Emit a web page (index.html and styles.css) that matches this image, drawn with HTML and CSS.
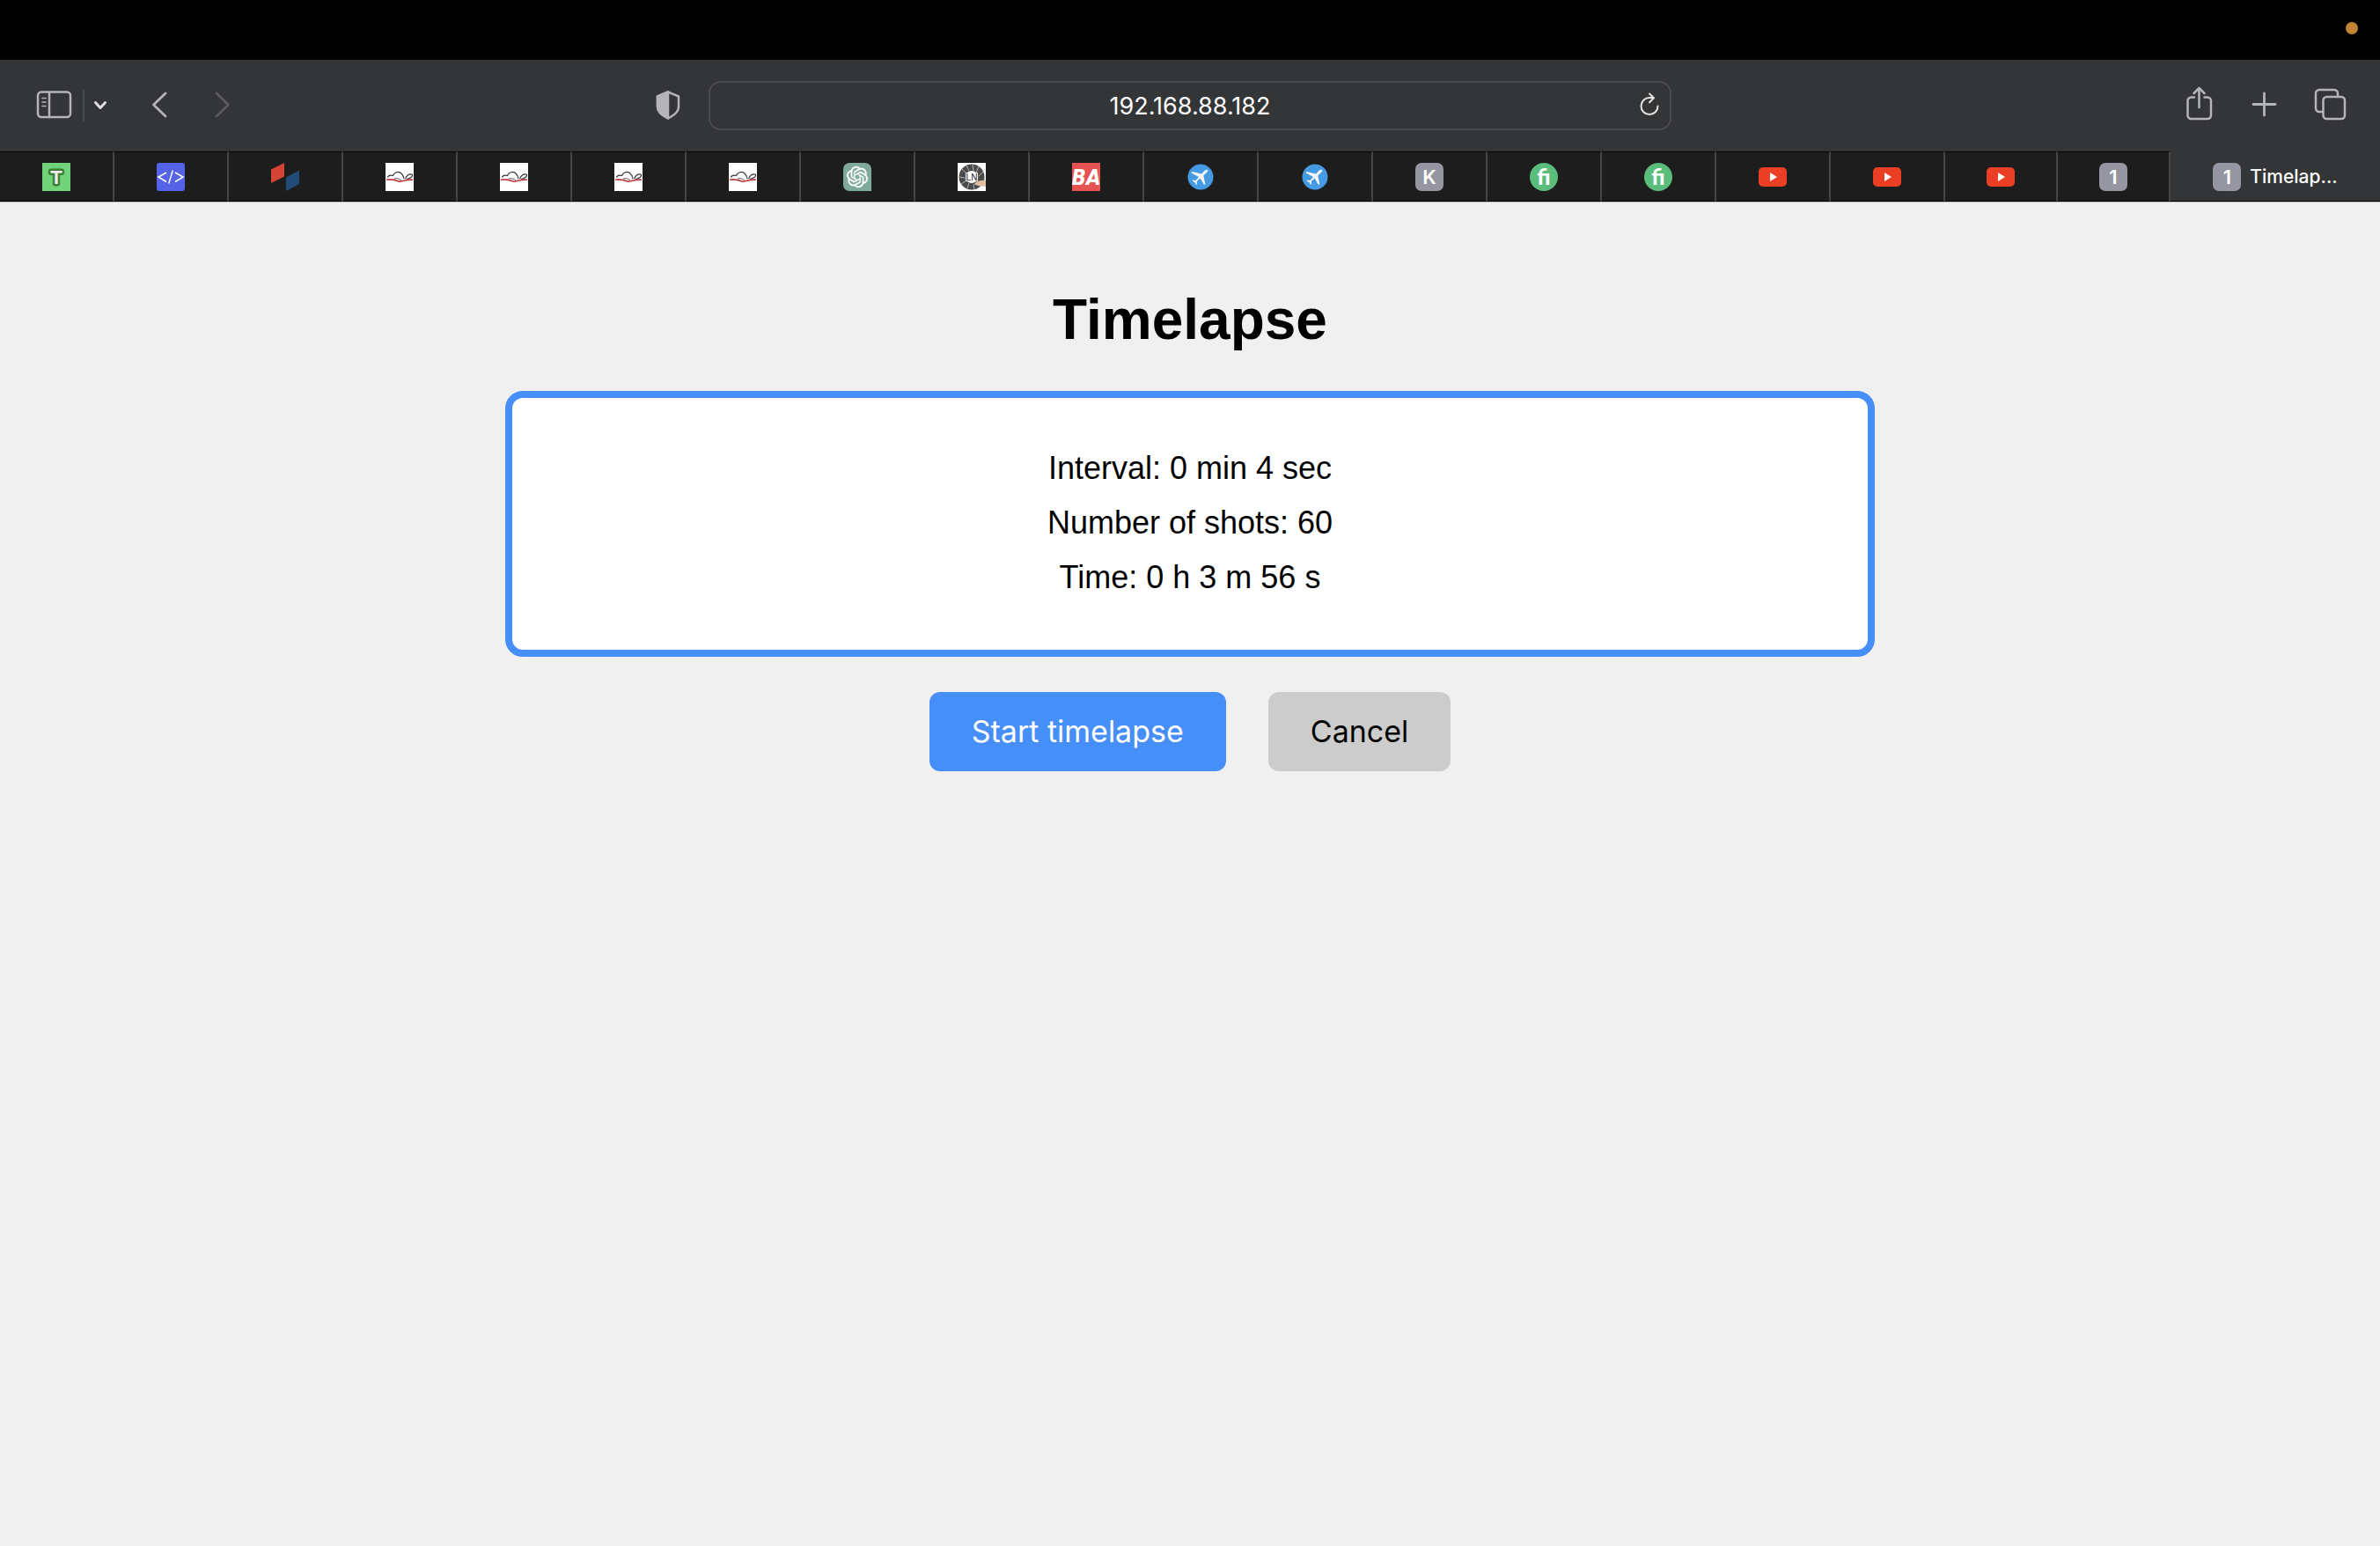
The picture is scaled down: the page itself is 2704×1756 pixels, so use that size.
FILE: index.html
```html
<!DOCTYPE html>
<html lang="en">
<head>
<meta charset="utf-8">
<meta name="viewport" content="width=device-width, initial-scale=1">
<title>Timelapse</title>
<link rel="stylesheet" href="styles.css">
</head>
<body>
<svg class="symbols" aria-hidden="true">
  <symbol id="cloud" viewBox="0 0 32 32">
    <rect width="32" height="32" fill="#fff"/>
    <path d="M2.500 16.500c1-3 4-2.500 6-2 1.500-4 6-5 9-3 2.500 2 3 4 3.500 6.500M22.500 18c1-3 4-6 7.500-5 2 2-2 5-6 5.500" fill="none" stroke="#333" stroke-width="1.200"/>
    <path d="M10 18c3-1 6 0 8 2" fill="none" stroke="#555" stroke-width="1"/>
    <path d="M1 19.200c5-1 9 0 15 2 5-1 9-2.500 15-2" fill="none" stroke="#c0393b" stroke-width="1.600"/>
  </symbol>
  <symbol id="plane" viewBox="0 0 32 32">
    <circle cx="16" cy="16" r="14.500" fill="#459be3"/>
    <path d="M24 8c-1.200-.8-2.500 0-3.500 1l-3.500 3.500L6.500 10l-1 1.300 8.500 4.700-3.500 4-3-.5-1 1 3 1.500 1.500 3 1-1-.3-3 4-3.500 4.300 7.500 1.300-1-2-9.500 3.500-3.500c1-1 2-2 1.200-3z" fill="#f6f6f6"/>
  </symbol>
  <symbol id="fi" viewBox="0 0 32 32">
    <circle cx="16" cy="16" r="16" fill="#5bbd7b"/>
    <text class="favicon__fi" x="16" y="25">fi</text>
  </symbol>
  <symbol id="video" viewBox="0 0 32 32">
    <rect y="5" width="32" height="22" rx="5" fill="#ea3f25"/>
    <path d="M13 11l8 5-8 5z" fill="#fff"/>
  </symbol>
</svg>

<div class="menubar"><span class="menubar__dot"></span></div>

<header class="toolbar">
  <div class="toolbar__side">
    <button class="icon-btn" aria-label="Show sidebar"><svg width="40" height="40" viewBox="42 100 40 40"><rect x="43" y="104.500" width="37" height="28.500" rx="4"/><path d="M56 105v28"/><path d="M48 111.500h4M48 116h4M48 120.500h4" stroke-width="1.600"/></svg></button>
    <span class="toolbar__divider"></span>
    <button class="icon-btn icon-btn--menu" aria-label="Tab groups"><svg width="16" height="40" viewBox="106 100 16 40"><path d="M108.500 116.500l5.500 6 5.500-6" stroke-width="3"/></svg></button>
    <button class="icon-btn icon-btn--back" aria-label="Back"><svg width="18" height="40" viewBox="172 100 18 40"><path d="M188 106l-13.500 13 13.500 13" stroke-width="2.800"/></svg></button>
    <button class="icon-btn icon-btn--forward" aria-label="Forward" disabled><svg width="18" height="40" viewBox="244 100 18 40"><path d="M246 106l13.500 13-13.500 13" stroke-width="2.800"/></svg></button>
    <button class="icon-btn icon-btn--shield" aria-label="Privacy report"><svg width="30" height="40" viewBox="744 100 30 40"><path d="M759 104.500l12 5v12c0 6-6 10-12 13-6-3-12-7-12-13v-12z"/><path d="M759 104.500v30c-6-3-12-7-12-13v-12z" fill="currentColor"/></svg></button>
  </div>
  <form class="address">
    <input class="address__input" type="text" value="192.168.88.182" aria-label="Address">
    <button class="icon-btn address__reload" type="button" aria-label="Reload"><svg width="24" height="40" viewBox="1861 100 24 40"><path d="M1883.500 120.500a9.500 9.500 0 1 1-9.500-9.500h4.500M1874 106.500l5 4.800-5 5" stroke-width="2"/></svg></button>
  </form>
  <div class="toolbar__side toolbar__side--right">
    <button class="icon-btn" aria-label="Share"><svg width="32" height="40" viewBox="2484 100 32 40"><path d="M2493 110.500h-3.500a4 4 0 0 0-4 4v16.500a4 4 0 0 0 4 4h18.500a4 4 0 0 0 4-4v-16.500a4 4 0 0 0-4-4h-3.500M2498.500 122v-21M2492.500 106l6-6 6 6"/></svg></button>
    <button class="icon-btn" aria-label="New tab"><svg width="30" height="40" viewBox="2557 100 30 40"><path d="M2571.500 106v25M2559 118.500h25" stroke-width="2.800"/></svg></button>
    <button class="icon-btn" aria-label="Tab overview"><svg width="36" height="40" viewBox="2630 100 36 40"><rect x="2639.500" y="110" width="24.500" height="25" rx="4"/><path d="M2639 127h-4a4 4 0 0 1-4-4v-17a4 4 0 0 1 4-4h17a4 4 0 0 1 4 4v3.500"/></svg></button>
  </div>
</header>

<nav class="tabs" aria-label="Open tabs">
  <a class="tab" href="#"><svg class="favicon" viewBox="0 0 32 32"><rect width="32" height="32" fill="#71d47b"/><text class="favicon__t" x="16" y="24">T</text></svg></a>
  <a class="tab" href="#"><svg class="favicon" viewBox="0 0 32 32"><rect width="32" height="32" rx="3" fill="#5563e8"/><path d="M11 11L2 16l9 5.500M21 11l9 5-9 5.500M18.300 8.500l-4.600 15" fill="none" stroke="#fff" stroke-width="1.500"/></svg></a>
  <a class="tab" href="#"><svg class="favicon" viewBox="0 0 32 32"><path d="M0 7.500L15 0v15.500L0 23z" fill="#d54537"/><path d="M17 16.500L32 8.500V24l-15 8z" fill="#214c78"/></svg></a>
  <a class="tab" href="#"><svg class="favicon"><use href="#cloud"/></svg></a>
  <a class="tab" href="#"><svg class="favicon"><use href="#cloud"/></svg></a>
  <a class="tab" href="#"><svg class="favicon"><use href="#cloud"/></svg></a>
  <a class="tab" href="#"><svg class="favicon"><use href="#cloud"/></svg></a>
  <a class="tab" href="#"><svg class="favicon" viewBox="0 0 32 32"><path d="M7 0h18a7 7 0 0 1 7 7v25H7a7 7 0 0 1-7-7V7a7 7 0 0 1 7-7z" fill="#80a99d"/><path transform="translate(4 4)" fill="#fff" stroke="#fff" stroke-width=".3" d="M22.2819 9.8211a5.9847 5.9847 0 0 0-.5157-4.9108 6.0462 6.0462 0 0 0-6.5098-2.9A6.0651 6.0651 0 0 0 4.9807 4.1818a5.9847 5.9847 0 0 0-3.9977 2.9 6.0462 6.0462 0 0 0 .7427 7.0966 5.98 5.98 0 0 0 .511 4.9107 6.051 6.051 0 0 0 6.5146 2.9001A5.9847 5.9847 0 0 0 13.2599 24a6.0557 6.0557 0 0 0 5.7718-4.2058 5.9894 5.9894 0 0 0 3.9977-2.9001 6.0557 6.0557 0 0 0-.7475-7.0729zm-9.022 12.6081a4.4755 4.4755 0 0 1-2.8764-1.0408l.1419-.0804 4.7783-2.7582a.7948.7948 0 0 0 .3927-.6813v-6.7369l2.02 1.1686a.071.071 0 0 1 .038.052v5.5826a4.504 4.504 0 0 1-4.4945 4.4944zm-9.6607-4.1254a4.4708 4.4708 0 0 1-.5346-3.0137l.142.0852 4.783 2.7582a.7712.7712 0 0 0 .7806 0l5.8428-3.3685v2.3324a.0804.0804 0 0 1-.0332.0615L9.74 19.9502a4.4992 4.4992 0 0 1-6.1408-1.6464zM2.3408 7.8956a4.485 4.485 0 0 1 2.3655-1.9728V11.6a.7664.7664 0 0 0 .3879.6765l5.8144 3.3543-2.0201 1.1685a.0757.0757 0 0 1-.071 0l-4.8303-2.7865A4.504 4.504 0 0 1 2.3408 7.872zm16.5963 3.8558L13.1038 8.364 15.1192 7.2a.0757.0757 0 0 1 .071 0l4.8303 2.7913a4.4944 4.4944 0 0 1-.6765 8.1042v-5.6772a.79.79 0 0 0-.407-.667zm2.0107-3.0231l-.142-.0852-4.7735-2.7818a.7759.7759 0 0 0-.7854 0L9.409 9.2297V6.8974a.0662.0662 0 0 1 .0284-.0615l4.8303-2.7866a4.4992 4.4992 0 0 1 6.6802 4.66zM8.3065 12.863l-2.02-1.1638a.0804.0804 0 0 1-.038-.0567V6.0742a4.4992 4.4992 0 0 1 7.3757-3.4537l-.142.0805L8.704 5.459a.7948.7948 0 0 0-.3927.6813zm1.0976-2.3654l2.602-1.4998 2.6069 1.4998v2.9994l-2.5974 1.4997-2.6067-1.4997Z"/></svg></a>
  <a class="tab" href="#"><svg class="favicon" viewBox="0 0 32 32"><rect width="32" height="32" fill="#fff"/><circle cx="16" cy="16" r="10.800" fill="none" stroke="#4b4b4d" stroke-width="7.400"/><path d="M10 12L5 7M13 9l-3-6M18 9l-1-7M21 11l3-7M24 15l5-5M8 17l-6-1M10 20l-6 4M13 23l-2 6M18 24l1 6M22 22l4 4" stroke="#ccc" stroke-width=".8"/><path d="M19 24c2-3 6-4 13-4.500v7.500c-4-1-9 0-13-3z" fill="#e0c1a4"/><text class="favicon__ln" x="16" y="20">LN</text></svg></a>
  <a class="tab" href="#"><svg class="favicon" viewBox="0 0 32 32"><rect width="32" height="32" fill="#e65352"/><text class="favicon__ba" x="16" y="25">BA</text></svg></a>
  <a class="tab" href="#"><svg class="favicon"><use href="#plane"/></svg></a>
  <a class="tab" href="#"><svg class="favicon"><use href="#plane"/></svg></a>
  <a class="tab" href="#"><span class="favicon favicon--letter">K</span></a>
  <a class="tab" href="#"><svg class="favicon"><use href="#fi"/></svg></a>
  <a class="tab" href="#"><svg class="favicon"><use href="#fi"/></svg></a>
  <a class="tab" href="#"><svg class="favicon"><use href="#video"/></svg></a>
  <a class="tab" href="#"><svg class="favicon"><use href="#video"/></svg></a>
  <a class="tab tab--narrow" href="#"><svg class="favicon"><use href="#video"/></svg></a>
  <a class="tab tab--narrow" href="#"><span class="favicon favicon--letter">1</span></a>
  <a class="tab tab--active" href="#" aria-current="page"><span class="favicon favicon--letter">1</span>Timelap...</a>
</nav>

<main class="page">
  <h1 class="page__title">Timelapse</h1>
  <section class="summary">
    <p class="summary__line">Interval: 0 min 4 sec</p>
    <p class="summary__line">Number of shots: 60</p>
    <p class="summary__line">Time: 0 h 3 m 56 s</p>
  </section>
  <div class="actions">
    <button class="btn btn--primary" type="button">Start timelapse</button>
    <button class="btn" type="button">Cancel</button>
  </div>
</main>
</body>
</html>
```
FILE: styles.css
```css
* {
  box-sizing: border-box;
}

body {
  margin: 0;
  background: #f0f0f0;
  color: #000;
  font-family: "Liberation Sans", Arial, sans-serif;
}

.symbols {
  display: none;
}

/* Menu bar */
.menubar {
  display: flex;
  justify-content: flex-end;
  align-items: center;
  height: 68px;
  padding: 0 25px 4px;
  background: #000;
}

.menubar__dot {
  width: 14px;
  height: 14px;
  border-radius: 50%;
  background: #c28432;
}

/* Toolbar */
.toolbar {
  display: grid;
  grid-template-columns: 1fr minmax(0, 1094px) 1fr;
  align-items: center;
  height: 104px;
  background: #343537;
  color: #b4b5b7;
}

.toolbar__side {
  display: flex;
  align-items: center;
  padding: 0 31px 0 42px;
}

.toolbar__side--right {
  justify-content: flex-end;
  gap: 42px;
  padding: 0 38px 0 0;
}

.toolbar__divider {
  width: 2px;
  height: 36px;
  margin: 0 10px 0 12px;
  background: #4a4b4d;
}

.icon-btn {
  display: block;
  padding: 0;
  border: 0;
  background: none;
  color: inherit;
}

.icon-btn svg {
  display: block;
  overflow: visible;
  fill: none;
  stroke: currentColor;
  stroke-width: 2.5;
  stroke-linecap: round;
  stroke-linejoin: round;
}

.icon-btn--menu {
  color: #dedfe0;
}

.icon-btn--back {
  margin-left: 50px;
}

.icon-btn--forward {
  margin-left: 54px;
  color: #5a5b5d;
}

.icon-btn--shield {
  margin-left: auto;
}

.address {
  display: grid;
  grid-template-columns: 24px 1fr 24px;
  align-items: center;
  height: 56px;
  padding: 0 12px;
  border: 2px solid #4a4b4d;
  border-radius: 14px;
}

.address__input {
  grid-column: 2;
  width: 100%;
  padding: 2px 0 0;
  border: 0;
  outline: 0;
  background: none;
  color: #fff;
  font: 27px/32px Inter, sans-serif;
  text-align: center;
}

.address__reload {
  color: #e4e4e4;
}

/* Tab strip */
.tabs {
  display: flex;
  height: 58px;
  border-bottom: 1px solid #bdbdbd;
  background: #1d1d1d;
}

.tab {
  display: flex;
  flex: 0 1 130px;
  justify-content: center;
  align-items: center;
  gap: 10px;
  border-top: 1px solid #000;
  border-right: 2px solid #464646;
  border-bottom: 1px solid #000;
  color: #fff;
  font: 500 21px/28px Inter, sans-serif;
  text-decoration: none;
}

.tab--narrow {
  flex-basis: 128px;
}

.tab--active {
  flex: 1 0 auto;
  border-top-color: #343537;
  border-right: 0;
  background: #343537;
}

.favicon {
  flex: none;
  width: 32px;
  height: 32px;
}

.favicon--letter {
  border-radius: 7px;
  background: #9696a2;
  font: 600 22px/32px Inter, sans-serif;
  text-align: center;
}

.favicon__t {
  fill: #f1efee;
  stroke: #3f7f35;
  stroke-width: 5px;
  stroke-linejoin: round;
  paint-order: stroke;
  font: bold 22px "Liberation Sans", Arial, sans-serif;
  text-anchor: middle;
}

.favicon__ln {
  fill: #222;
  stroke: #fff;
  stroke-width: 2px;
  paint-order: stroke;
  font: 10px "Liberation Sans", Arial, sans-serif;
  text-anchor: middle;
}

.favicon__ba {
  fill: #fff;
  font: italic 700 24px "Liberation Sans Narrow", "DejaVu Sans Condensed", Lato, sans-serif;
  text-anchor: middle;
}

.favicon__fi {
  fill: #fff;
  font: 900 25px Lato, sans-serif;
  text-anchor: middle;
}

/* Page */
.page {
  display: flex;
  flex-direction: column;
  align-items: center;
  padding: 96px 40px;
}

.page__title {
  margin: 0 0 44px;
  font-size: 64px;
  line-height: 74px;
}

.summary {
  width: 100%;
  max-width: 1556px;
  padding: 49px 50px 51px;
  border: 8px solid #468ef8;
  border-radius: 20px;
  background: #fff;
  text-align: center;
}

.summary__line {
  margin: 0;
  font-size: 36px;
  line-height: 62px;
}

.actions {
  display: flex;
  gap: 48px;
  margin-top: 40px;
}

.btn {
  padding: 24px 48px;
  border: 0;
  border-radius: 12px;
  background: #ccc;
  color: #000;
  font: 34px/42px Inter, sans-serif;
}

.btn--primary {
  background: #468ef8;
  color: #fff;
}
```
